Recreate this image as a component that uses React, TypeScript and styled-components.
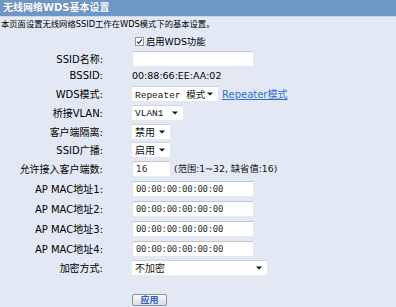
import React from "react";
import styled, { createGlobalStyle } from "styled-components";

const Global = createGlobalStyle`
  html, body { margin: 0; padding: 0; background: #e2e9f4; }
  body {
    font-family: "DejaVu Sans", "Noto Sans CJK SC", sans-serif;
    font-size: 10px;
    color: #000;
  }
`;

const Page = styled.div`
  width: 396px;
  height: 307px;
  background: #e2e9f4;
  overflow: hidden;
  display: flex;
  flex-direction: column;
`;

const Header = styled.div`
  height: 16px;
  background: #6e96c6;
  color: #fff;
  font-weight: bold;
  font-size: 10px;
  line-height: 16px;
  padding-left: 3px;
  border-bottom: 1px solid #cbd7e9;
  text-shadow: 0 0 1px #4a6f9c;
`;

const Desc = styled.div`
  height: 15px;
  line-height: 15px;
  padding-left: 1px;
  font-size: 8.3px;
`;

const Row = styled.div<{ $h: number }>`
  display: grid;
  grid-template-columns: 103px auto;
  column-gap: 29px;
  align-items: center;
  height: ${(p) => p.$h}px;
`;

const Label = styled.div`
  text-align: right;
  white-space: nowrap;
`;

const Value = styled.div<{ $size?: number }>`
  display: flex;
  align-items: center;
  gap: 4px;
  white-space: nowrap;
  font-size: ${(p) => (p.$size ? `${p.$size}px` : "inherit")};
`;

const TextInput = styled.input<{ $w: number; $mono?: boolean }>`
  width: ${(p) => p.$w}px;
  height: 15px;
  box-sizing: border-box;
  margin: 0;
  padding: 0 0 0 3px;
  background: #fff;
  border: none;
  border-top: 1px solid #c3c8d0;
  border-left: 1px solid #dfe3ea;
  outline: none;
  color: #333;
  font-family: ${(p) =>
    p.$mono ? `"DejaVu Sans Mono", monospace` : `"DejaVu Sans", "Noto Sans CJK SC", sans-serif`};
  font-size: 9px;
  letter-spacing: ${(p) => (p.$mono ? "-0.3px" : "0")};
`;

const SelectBox = styled.div<{ $w: number; $mono?: boolean }>`
  width: ${(p) => p.$w}px;
  height: 15px;
  box-sizing: border-box;
  background: #fff;
  border-top: 1px solid #d0d4db;
  display: flex;
  align-items: center;
  justify-content: space-between;
  padding: 0 5px 0 3px;
  font-family: ${(p) =>
    p.$mono
      ? `"Liberation Mono", "Noto Sans CJK SC", monospace`
      : `"DejaVu Sans", "Noto Sans CJK SC", sans-serif`};
  font-size: ${(p) => (p.$mono ? "9.5px" : "10px")};
  color: #111;
  white-space: pre;
`;

const Link = styled.a`
  color: #2f6fc8;
  text-decoration: underline;
  cursor: pointer;
`;

const Hint = styled.span`
  color: #111;
  font-size: 9.3px;
`;

const CheckLabel = styled.label`
  display: flex;
  align-items: center;
  gap: 2px;
  margin-left: 3px;
  font-size: 9.3px;
`;

const ApplyButton = styled.button`
  width: 35px;
  height: 12px;
  box-sizing: border-box;
  margin: 0;
  padding: 0;
  border: 1px solid #8d939c;
  border-radius: 2px;
  background: linear-gradient(#f6f7f9, #d9dde3);
  color: #2d5fbf;
  font-family: "Noto Sans CJK SC", sans-serif;
  font-size: 9px;
  line-height: 10px;
  font-weight: bold;
`;

const Spacer = styled.div<{ $h: number }>`
  height: ${(p) => p.$h}px;
`;

const Caret = () => (
  <svg width="6" height="4" viewBox="0 0 6 4">
    <path d="M0 0.5 H6 L3 3.5 Z" fill="#111" />
  </svg>
);

const CheckIcon = () => (
  <svg width="9" height="9" viewBox="0 0 9 9">
    <rect x="0.5" y="0.5" width="8" height="8" fill="#fff" stroke="#8c96a3" />
    <path d="M2 4.6 L3.7 6.4 L7 2.3" fill="none" stroke="#222" strokeWidth="1.1" />
  </svg>
);

const Select: React.FC<{ w: number; mono?: boolean; children: React.ReactNode }> = ({ w, mono, children }) => (
  <SelectBox $w={w} $mono={mono}>
    <span>{children}</span>
    <Caret />
  </SelectBox>
);

export default function App() {
  return (
    <Page>
      <Global />
      <Header>无线网络WDS基本设置</Header>
      <Desc>本页面设置无线网络SSID工作在WDS模式下的基本设置。</Desc>
      <Row $h={18}>
        <Label />
        <Value>
          <CheckLabel>
            <CheckIcon />
            启用WDS功能
          </CheckLabel>
        </Value>
      </Row>
      <Row $h={17}>
        <Label>SSID名称:</Label>
        <Value>
          <TextInput $w={121} defaultValue="" readOnly />
        </Value>
      </Row>
      <Row $h={17}>
        <Label>BSSID:</Label>
        <Value $size={9.5}>00:88:66:EE:AA:02</Value>
      </Row>
      <Row $h={19}>
        <Label>WDS模式:</Label>
        <Value>
          <Select w={86} mono>Repeater 模式</Select>
          <Link>Repeater模式</Link>
        </Value>
      </Row>
      <Row $h={19}>
        <Label>桥接VLAN:</Label>
        <Value>
          <Select w={51} mono>VLAN1</Select>
        </Value>
      </Row>
      <Row $h={18}>
        <Label>客户端隔离:</Label>
        <Value>
          <Select w={38}>禁用</Select>
        </Value>
      </Row>
      <Row $h={18}>
        <Label>SSID广播:</Label>
        <Value>
          <Select w={38}>启用</Select>
        </Value>
      </Row>
      <Row $h={20}>
        <Label>允许接入客户端数:</Label>
        <Value>
          <TextInput $w={38} defaultValue="16" readOnly />
          <Hint>(范围:1~32, 缺省值:16)</Hint>
        </Value>
      </Row>
      {[1, 2, 3, 4].map((n) => (
        <Row $h={20} key={n}>
          <Label>AP MAC地址{n}:</Label>
          <Value>
            <TextInput $w={121} $mono defaultValue="00:00:00:00:00:00" readOnly />
          </Value>
        </Row>
      ))}
      <Row $h={18}>
        <Label>加密方式:</Label>
        <Value>
          <Select w={135}>不加密</Select>
        </Value>
      </Row>
      <Spacer $h={18} />
      <Row $h={12}>
        <Label />
        <Value>
          <ApplyButton>应用</ApplyButton>
        </Value>
      </Row>
    </Page>
  );
}
